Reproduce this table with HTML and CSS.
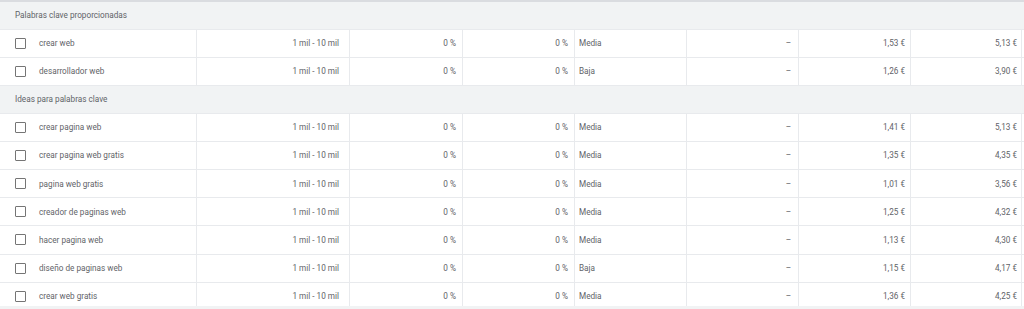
FILE: index.html
```html
<!DOCTYPE html>
<html lang="es">
<head>
<meta charset="utf-8">
<link rel="stylesheet" href="styles.css">
</head>
<body>
<div class="table">
  <div class="section">Palabras clave proporcionadas</div>
  <div class="row"><div class="cell kw"><span class="cb"></span>crear web</div><div class="cell c2">1 mil - 10 mil</div><div class="cell c3">0 %</div><div class="cell c4">0 %</div><div class="cell c5">Media</div><div class="cell c6">–</div><div class="cell c7">1,53 €</div><div class="cell c8">5,13 €</div></div>
  <div class="row"><div class="cell kw"><span class="cb"></span>desarrollador web</div><div class="cell c2">1 mil - 10 mil</div><div class="cell c3">0 %</div><div class="cell c4">0 %</div><div class="cell c5">Baja</div><div class="cell c6">–</div><div class="cell c7">1,26 €</div><div class="cell c8">3,90 €</div></div>
  <div class="section">Ideas para palabras clave</div>
  <div class="row"><div class="cell kw"><span class="cb"></span>crear pagina web</div><div class="cell c2">1 mil - 10 mil</div><div class="cell c3">0 %</div><div class="cell c4">0 %</div><div class="cell c5">Media</div><div class="cell c6">–</div><div class="cell c7">1,41 €</div><div class="cell c8">5,13 €</div></div>
  <div class="row"><div class="cell kw"><span class="cb"></span>crear pagina web gratis</div><div class="cell c2">1 mil - 10 mil</div><div class="cell c3">0 %</div><div class="cell c4">0 %</div><div class="cell c5">Media</div><div class="cell c6">–</div><div class="cell c7">1,35 €</div><div class="cell c8">4,35 €</div></div>
  <div class="row"><div class="cell kw"><span class="cb"></span>pagina web gratis</div><div class="cell c2">1 mil - 10 mil</div><div class="cell c3">0 %</div><div class="cell c4">0 %</div><div class="cell c5">Media</div><div class="cell c6">–</div><div class="cell c7">1,01 €</div><div class="cell c8">3,56 €</div></div>
  <div class="row"><div class="cell kw"><span class="cb"></span>creador de paginas web</div><div class="cell c2">1 mil - 10 mil</div><div class="cell c3">0 %</div><div class="cell c4">0 %</div><div class="cell c5">Media</div><div class="cell c6">–</div><div class="cell c7">1,25 €</div><div class="cell c8">4,32 €</div></div>
  <div class="row"><div class="cell kw"><span class="cb"></span>hacer pagina web</div><div class="cell c2">1 mil - 10 mil</div><div class="cell c3">0 %</div><div class="cell c4">0 %</div><div class="cell c5">Media</div><div class="cell c6">–</div><div class="cell c7">1,13 €</div><div class="cell c8">4,30 €</div></div>
  <div class="row"><div class="cell kw"><span class="cb"></span>diseño de paginas web</div><div class="cell c2">1 mil - 10 mil</div><div class="cell c3">0 %</div><div class="cell c4">0 %</div><div class="cell c5">Baja</div><div class="cell c6">–</div><div class="cell c7">1,15 €</div><div class="cell c8">4,17 €</div></div>
  <div class="row"><div class="cell kw"><span class="cb"></span>crear web gratis</div><div class="cell c2">1 mil - 10 mil</div><div class="cell c3">0 %</div><div class="cell c4">0 %</div><div class="cell c5">Media</div><div class="cell c6">–</div><div class="cell c7">1,36 €</div><div class="cell c8">4,25 €</div></div>
</div>
</body>
</html>
```
FILE: styles.css
```css
html, body {
  margin: 0;
  padding: 0;
  background: #f1f3f4;
}
body {
  font-family: Roboto, "Liberation Sans", sans-serif;
  font-size: 8.2px;
  color: #5f6368;
}
.table {
  width: 1024px;
  height: 306px;
  box-sizing: border-box;
  overflow: hidden;
  border-top: 2px solid #dadce0;
  background: #ffffff;
}
.section {
  height: 27.6px;
  box-sizing: border-box;
  display: flex;
  align-items: center;
  padding-left: 15px;
  background: #f1f3f4;
  border-bottom: 1px solid #e8eaed;
  color: #5f6368;
}
.row {
  display: grid;
  grid-template-columns: 197px 153px 113px 112px 112px 112px 112px 111px 2px;
  height: 28.2px;
  box-sizing: border-box;
  border-bottom: 1px solid #e8eaed;
  background: #ffffff;
}
.cell {
  display: flex;
  align-items: center;
  justify-content: flex-end;
  border-right: 1px solid #e8eaed;
  white-space: nowrap;
  color: #5f6368;
}
.kw {
  justify-content: flex-start;
  padding-left: 15px;
}
.cb {
  width: 11px;
  height: 11px;
  box-sizing: border-box;
  border: 1.6px solid #757575;
  border-radius: 1px;
  margin-right: 13px;
  flex: none;
}
.c2 { padding-right: 10px; }
.c3 { padding-right: 6px; }
.c4 { padding-right: 6px; }
.c5 { justify-content: flex-start; padding-left: 4px; }
.c6 { padding-right: 7px; }
.c7 { padding-right: 5px; }
.c8 { padding-right: 4px; }
```
